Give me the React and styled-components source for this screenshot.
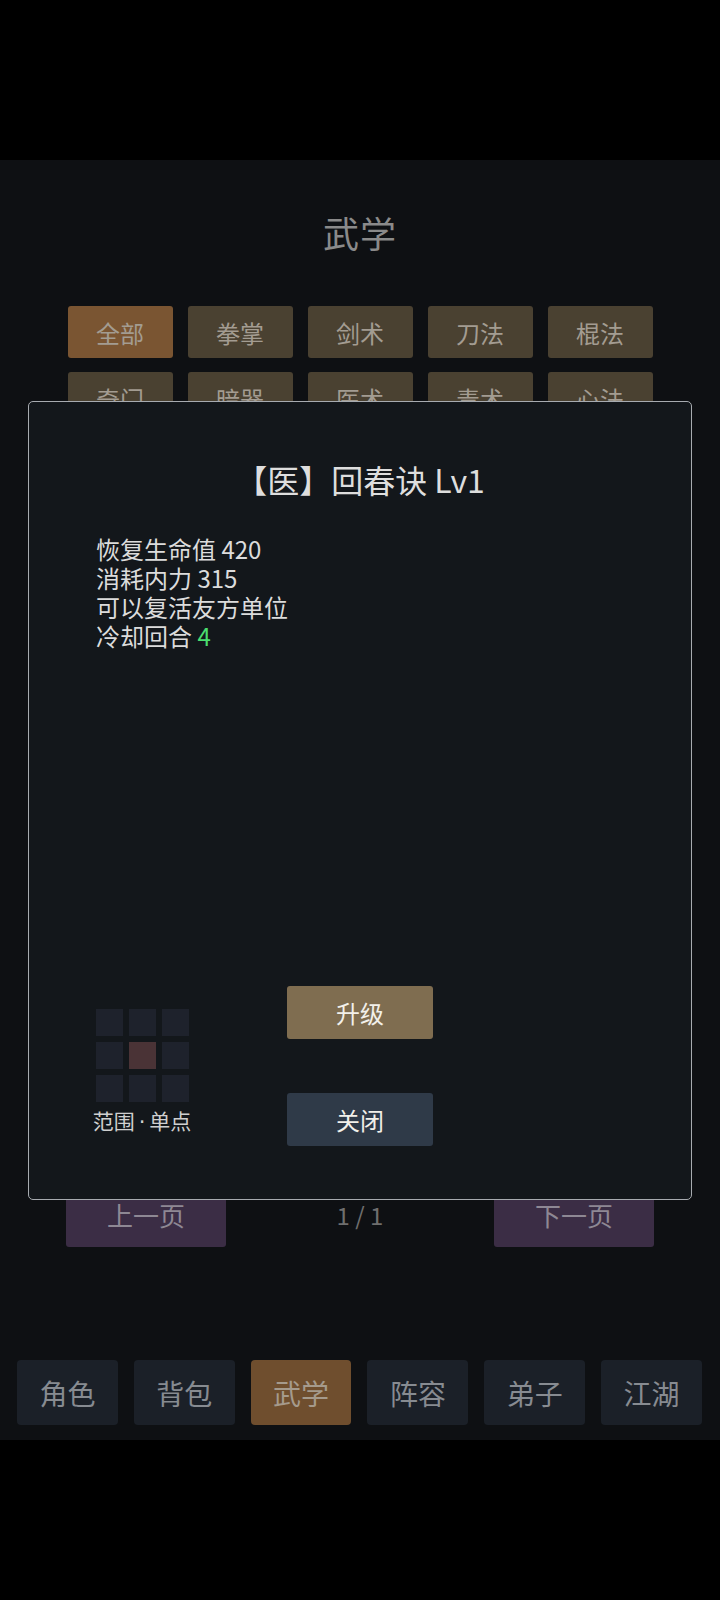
import React from 'react';
import styled, { createGlobalStyle } from "styled-components";

const GlobalStyle = createGlobalStyle`
  html, body {
    margin: 0;
    padding: 0;
    background: #000;
  }
  body {
    font-family: "Noto Sans CJK SC", "Noto Sans", sans-serif;
  }
`;

const Screen = styled.div`
  width: 720px;
  height: 1600px;
  background: #000;
  padding-top: 160px;
  box-sizing: border-box;
  position: relative;
`;

const Frame = styled.div`
  width: 720px;
  height: 1280px;
  background: #0e1013;
  display: flex;
  flex-direction: column;
  align-items: center;
`;

const Title = styled.h1`
  margin: 52px 0 0;
  font-size: 36px;
  line-height: 40px;
  font-weight: 400;
  color: #8a8a8a;
  letter-spacing: 1px;
`;

const TabGrid = styled.div`
  display: grid;
  grid-template-columns: repeat(5, 105px);
  gap: 14px 15px;
  margin-top: 54px;
`;

const Tab = styled.div`
  height: 52px;
  border-radius: 3px;
  background: ${p => p.active ? "#7a5532" : "#4a4131"};
  color: #a39c91;
  font-size: 24px;
  display: flex;
  align-items: center;
  justify-content: center;
`;

const Pager = styled.div`
  margin-top: auto;
  width: 588px;
  display: flex;
  justify-content: space-between;
  align-items: center;
`;

const PageButton = styled.div`
  width: 160px;
  height: 66px;
  background: #3b2d45;
  border-radius: 3px;
  color: #8e8894;
  font-size: 26px;
  display: flex;
  align-items: center;
  justify-content: center;
`;

const PageText = styled.div`
  color: #6e6e6e;
  font-size: 24px;
`;

const Nav = styled.div`
  margin-top: 113px;
  margin-bottom: 15px;
  width: 100%;
  box-sizing: border-box;
  padding: 0 18px 0 17px;
  display: flex;
  gap: 16px;
`;

const NavItem = styled.div`
  flex: 1;
  height: 65px;
  border-radius: 4px;
  background: ${p => p.active ? "#6f4e2e" : "#1b2028"};
  color: ${p => p.active ? "#a59a8c" : "#878b91"};
  font-size: 28px;
  display: flex;
  align-items: center;
  justify-content: center;
`;

const Modal = styled.div`
  position: absolute;
  left: 28px;
  top: 401px;
  width: 664px;
  height: 799px;
  box-sizing: border-box;
  background: #13171b;
  border: 1px solid #a7abb0;
  border-radius: 5px;
  padding: 0 67px 53px;
  display: flex;
  flex-direction: column;
`;

const SkillName = styled.div`
  margin-top: 57px;
  text-align: center;
  font-size: 32px;
  line-height: 40px;
  color: #dedede;
`;

const Desc = styled.div`
  margin-top: 35px;
  font-size: 24px;
  line-height: 29px;
  color: #dcdcdc;
`;

const Green = styled.span`
  color: #4ade6f;
`;

const Footer = styled.div`
  margin-top: auto;
  display: grid;
  grid-template-columns: 1fr auto 1fr;
  align-items: end;
`;

const Range = styled.div`
  margin-left: -6px;
  width: 104px;
  display: flex;
  flex-direction: column;
  align-items: center;
  margin-bottom: 12px;
`;

const Cells = styled.div`
  display: grid;
  grid-template-columns: repeat(3, 27px);
  grid-auto-rows: 27px;
  gap: 6px;
`;

const Cell = styled.div`
  background: ${p => p.hit ? "#4a3336" : "#1e222c"};
`;

const RangeLabel = styled.div`
  margin-top: 6px;
  font-size: 21px;
  line-height: 24px;
  color: #cfcfcf;
  white-space: nowrap;
`;

const Dot = styled.span`
  font-family: "DejaVu Sans", sans-serif;
  margin: 0 4px;
`;

const Actions = styled.div`
  display: flex;
  flex-direction: column;
  gap: 54px;
`;

const ActionButton = styled.div`
  width: 146px;
  height: 53px;
  border-radius: 3px;
  background: ${p => p.kind === "up" ? "#7f6d50" : "#2f3a48"};
  color: #f2f0ea;
  font-size: 24px;
  display: flex;
  align-items: center;
  justify-content: center;
`;

const tabs = ["全部", "拳掌", "剑术", "刀法", "棍法", "奇门", "暗器", "医术", "毒术", "心法"];
const navs = ["角色", "背包", "武学", "阵容", "弟子", "江湖"];

const App = () => {
  return (
    <Screen>
      <GlobalStyle />
      <Frame>
        <Title>武学</Title>
        <TabGrid>
          {tabs.map((t, i) => <Tab key={t} active={i === 0}>{t}</Tab>)}
        </TabGrid>
        <Pager>
          <PageButton>上一页</PageButton>
          <PageText>1 / 1</PageText>
          <PageButton>下一页</PageButton>
        </Pager>
        <Nav>
          {navs.map((n) => <NavItem key={n} active={n === "武学"}>{n}</NavItem>)}
        </Nav>
      </Frame>

      <Modal>
        <SkillName>【医】回春诀 Lv1</SkillName>
        <Desc>
          <div>恢复生命值 420</div>
          <div>消耗内力 315</div>
          <div>可以复活友方单位</div>
          <div>冷却回合 <Green>4</Green></div>
        </Desc>
        <Footer>
          <Range>
            <Cells>
              {[0, 1, 2, 3, 4, 5, 6, 7, 8].map(i => <Cell key={i} hit={i === 4} />)}
            </Cells>
            <RangeLabel>范围<Dot>·</Dot>单点</RangeLabel>
          </Range>
          <Actions>
            <ActionButton kind="up">升级</ActionButton>
            <ActionButton kind="close">关闭</ActionButton>
          </Actions>
          <div />
        </Footer>
      </Modal>
    </Screen>
  );
};

export default App;
